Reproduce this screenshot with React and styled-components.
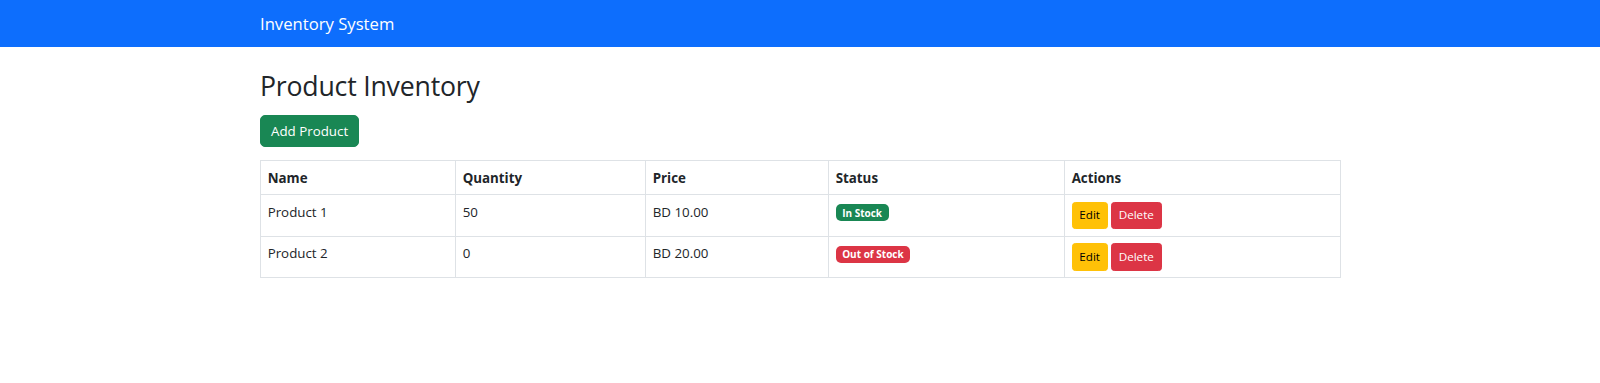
import React from 'react';
import styled, { createGlobalStyle } from 'styled-components';

const GlobalStyle = createGlobalStyle`
  * { box-sizing: border-box; }
  body {
    margin: 0;
    font-family: "Segoe UI", "Open Sans", sans-serif;
    font-size: 13.33px;
    line-height: 20px;
    color: #212529;
    background: #fff;
  }
`;

const Navbar = styled.nav`
  background: #0d6efd;
  height: 47px;
  display: flex;
  align-items: center;
`;

const Container = styled.div`
  width: 1080px;
  margin: 0 auto;
`;

const Brand = styled.a`
  color: #fff;
  font-size: 16.67px;
  line-height: 25px;
  text-decoration: none;
`;

const Main = styled(Container)`
  padding-top: 23px;
`;

const Title = styled.h2`
  margin: 0 0 13px;
  font-size: 26.67px;
  line-height: 32px;
  font-weight: 500;
  letter-spacing: -0.2px;
`;

const Button = styled.button`
  font-family: inherit;
  font-size: ${p => (p.$small ? '11.67px' : '13.33px')};
  line-height: ${p => (p.$small ? '18.5px' : '20px')};
  padding: ${p => (p.$small ? '3.33px 6.67px' : '5px 10px')};
  border-radius: ${p => (p.$small ? '3.33px' : '5px')};
  border: 1px solid ${p => p.$bg};
  background: ${p => p.$bg};
  color: ${p => p.$fg};
  cursor: pointer;
  margin-right: ${p => (p.$gap ? '3.33px' : '0')};
`;

const Table = styled.table`
  margin-top: 13px;
  width: 100%;
  border-collapse: collapse;
  table-layout: fixed;
  th, td {
    border: 1px solid #dee2e6;
    padding: 6.67px;
    text-align: left;
    vertical-align: top;
  }
  th { font-weight: 700; }
`;

const Badge = styled.span`
  display: inline-block;
  font-size: 10px;
  line-height: 1;
  font-weight: 700;
  padding: 3.5px 6.5px;
  border-radius: 5px;
  color: #fff;
  background: ${p => p.$bg};
  vertical-align: baseline;
`;

const products = [
  { name: 'Product 1', qty: 50, price: 'BD 10.00' },
  { name: 'Product 2', qty: 0, price: 'BD 20.00' },
];

const widths = [195, 190, 183, 236, 276];

export default function App() {
  return (
    <>
      <GlobalStyle />
      <Navbar>
        <Container>
          <Brand href="#">Inventory System</Brand>
        </Container>
      </Navbar>
      <Main>
        <Title>Product Inventory</Title>
        <Button $bg="#198754" $fg="#fff">Add Product</Button>
        <Table>
          <colgroup>
            {widths.map((w, i) => <col key={i} style={{ width: w }} />)}
          </colgroup>
          <thead>
            <tr>
              <th>Name</th>
              <th>Quantity</th>
              <th>Price</th>
              <th>Status</th>
              <th>Actions</th>
            </tr>
          </thead>
          <tbody>
            {products.map(p => (
              <tr key={p.name}>
                <td>{p.name}</td>
                <td>{p.qty}</td>
                <td>{p.price}</td>
                <td>
                  {p.qty > 0
                    ? <Badge $bg="#198754">In Stock</Badge>
                    : <Badge $bg="#dc3545">Out of Stock</Badge>}
                </td>
                <td>
                  <Button $small $gap $bg="#ffc107" $fg="#000">Edit</Button>
                  <Button $small $bg="#dc3545" $fg="#fff">Delete</Button>
                </td>
              </tr>
            ))}
          </tbody>
        </Table>
      </Main>
    </>
  );
}
